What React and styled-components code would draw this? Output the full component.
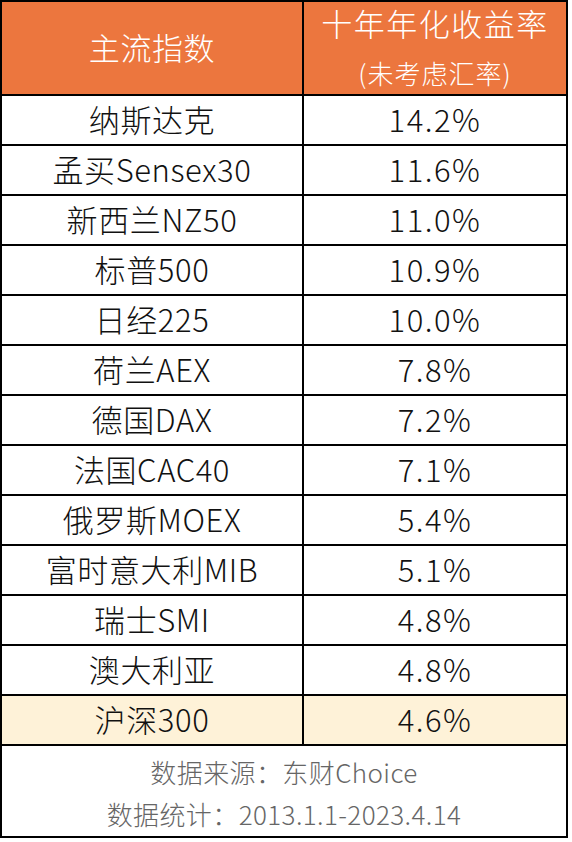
import React from "react";
import styled, { createGlobalStyle } from "styled-components";

const GlobalStyle = createGlobalStyle`
  body {
    margin: 0;
    background: #ffffff;
    font-family: "Noto Sans CJK SC", "Noto Sans", sans-serif;
  }
`;

const Table = styled.div`
  width: 568px;
  border: 2px solid #000;
  box-sizing: border-box;
`;

const Row = styled.div`
  display: grid;
  grid-template-columns: 302px 1fr;
  height: ${(p) => (p.tall ? "92px" : "48px")};
  border-top: ${(p) => (p.first ? "none" : "2px solid #000")};
  background: ${(p) => p.bg || "#ffffff"};
`;

const Cell = styled.div`
  display: flex;
  flex-direction: column;
  align-items: center;
  justify-content: center;
  border-right: ${(p) => (p.left ? "2px solid #000" : "none")};
  font-size: 31px;
  font-weight: 300;
  letter-spacing: ${(p) => (p.left ? "0.6px" : "1.5px")};
  color: #111;
  line-height: 1;
  padding-bottom: 4px;
  box-sizing: border-box;
`;

const HeadTitle = styled.div`
  font-size: 31px;
  font-weight: 300;
  color: #ffffff;
  line-height: 1;
`;

const HeadSub = styled.div`
  font-size: 26px;
  font-weight: 300;
  letter-spacing: 1px;
  color: #ffffff;
  line-height: 1;
  margin-top: 22px;
`;

const Footer = styled.div`
  border-top: 2px solid #000;
  height: 92px;
  display: flex;
  flex-direction: column;
  align-items: center;
  justify-content: center;
  gap: 16px;
  color: #666;
  font-size: 26px;
  font-weight: 300;
  letter-spacing: 0.4px;
  line-height: 1;
  padding-top: 4px;
  box-sizing: border-box;
`;

const rows = [
  ["纳斯达克", "14.2%"],
  ["孟买Sensex30", "11.6%"],
  ["新西兰NZ50", "11.0%"],
  ["标普500", "10.9%"],
  ["日经225", "10.0%"],
  ["荷兰AEX", "7.8%"],
  ["德国DAX", "7.2%"],
  ["法国CAC40", "7.1%"],
  ["俄罗斯MOEX", "5.4%"],
  ["富时意大利MIB", "5.1%"],
  ["瑞士SMI", "4.8%"],
  ["澳大利亚", "4.8%"],
  ["沪深300", "4.6%"],
];

export default function App() {
  return (
    <>
      <GlobalStyle />
      <Table>
        <Row first tall bg="#EC763E">
          <Cell left>
            <HeadTitle>主流指数</HeadTitle>
          </Cell>
          <Cell>
            <HeadTitle>十年年化收益率</HeadTitle>
            <HeadSub>(未考虑汇率)</HeadSub>
          </Cell>
        </Row>
        {rows.map(([name, value], i) => (
          <Row key={name} bg={i === rows.length - 1 ? "#FEF2D8" : undefined}>
            <Cell left>{name}</Cell>
            <Cell>{value}</Cell>
          </Row>
        ))}
        <Footer>
          <div>数据来源：东财Choice</div>
          <div>数据统计：2013.1.1-2023.4.14</div>
        </Footer>
      </Table>
    </>
  );
}
